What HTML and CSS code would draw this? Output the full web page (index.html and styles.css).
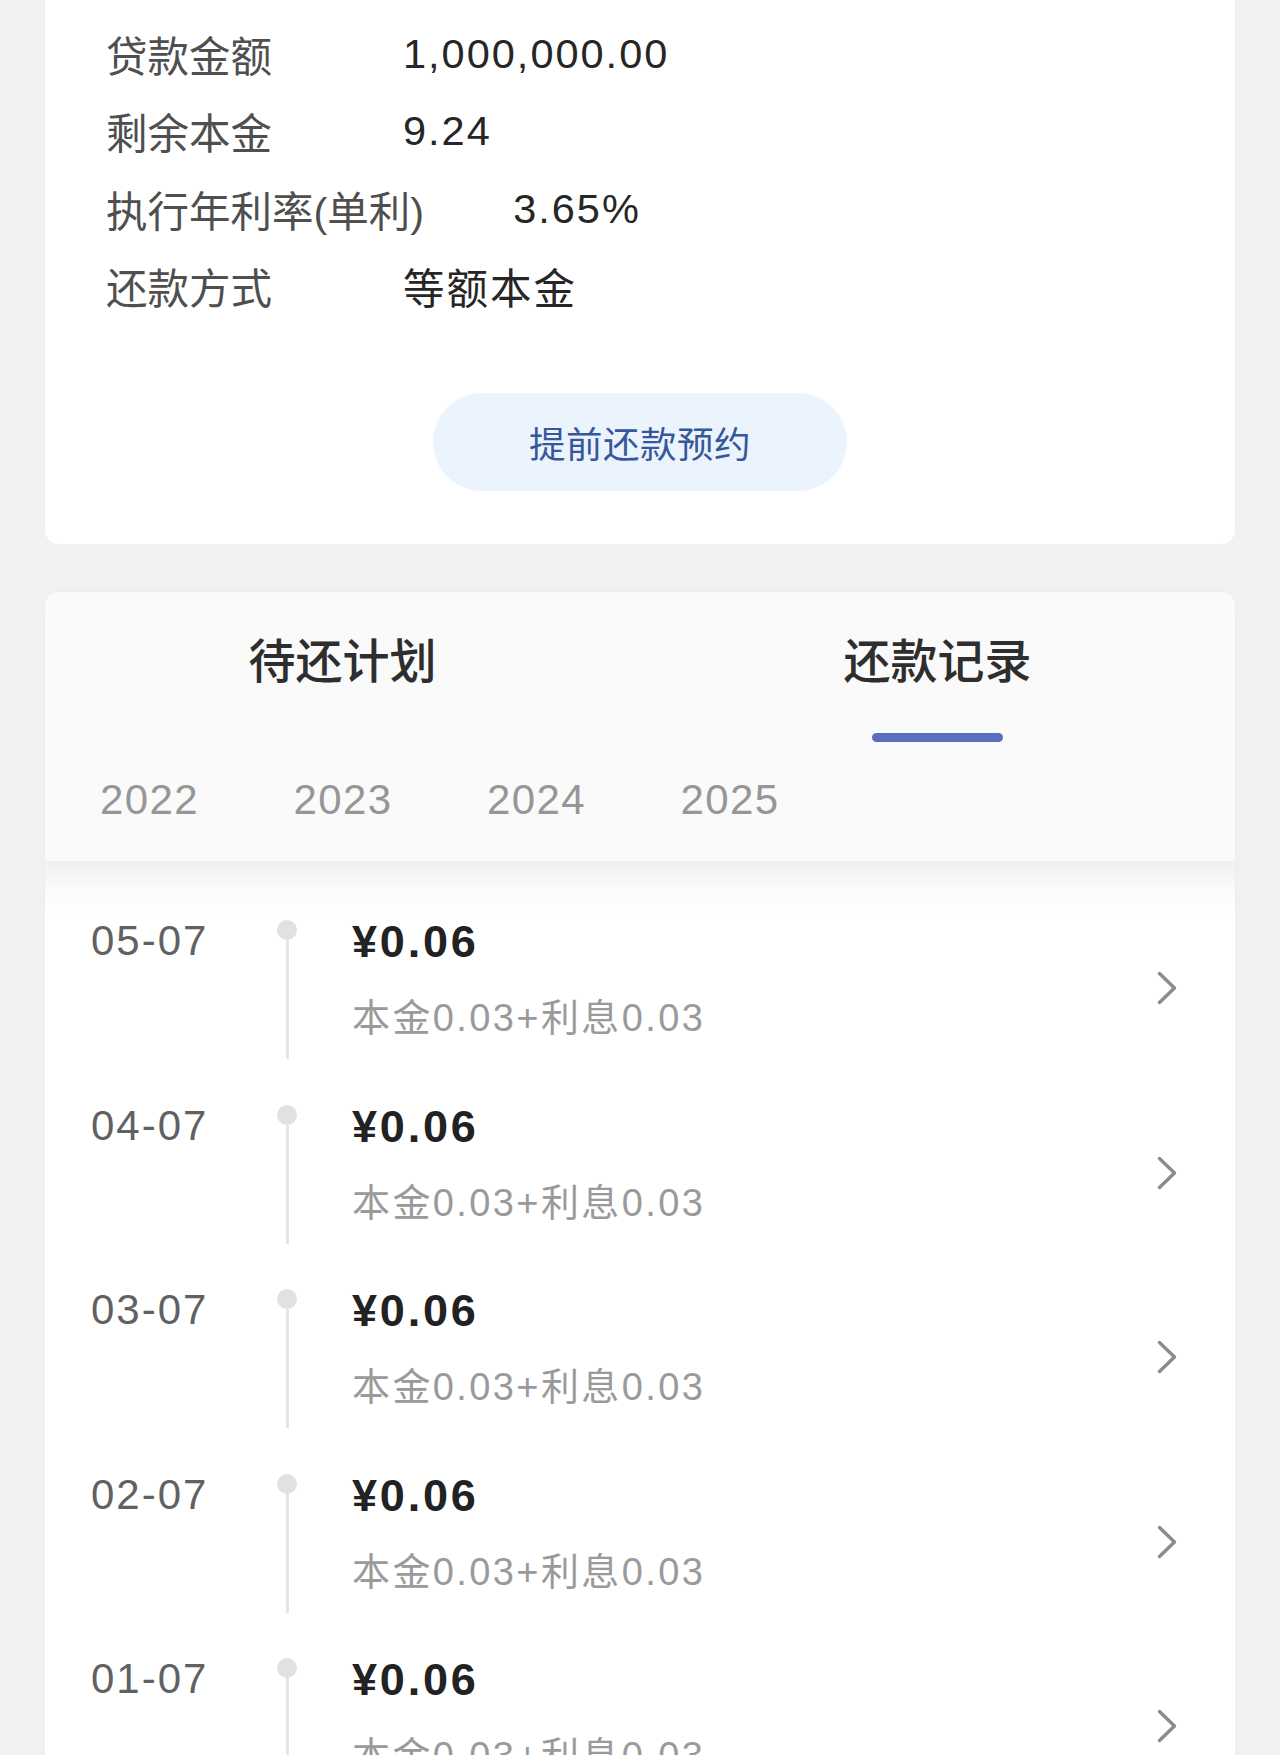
FILE: index.html
```html
<!DOCTYPE html>
<html lang="zh-CN">
<head>
<meta charset="utf-8">
<title>还款记录</title>
<link rel="stylesheet" href="styles.css">
</head>
<body>
<div class="page">
  <section class="card info-card">
    <div class="info-row"><span class="info-label">贷款金额</span><span class="info-value">1,000,000.00</span></div>
    <div class="info-row"><span class="info-label">剩余本金</span><span class="info-value">9.24</span></div>
    <div class="info-row"><span class="info-label">执行年利率(单利)</span><span class="info-value">3.65%</span></div>
    <div class="info-row"><span class="info-label">还款方式</span><span class="info-value">等额本金</span></div>
    <div class="btn-wrap"><button class="prepay-btn">提前还款预约</button></div>
  </section>

  <section class="card record-card">
    <div class="record-head">
      <div class="tabs">
        <div class="tab">待还计划</div>
        <div class="tab active">还款记录<span class="tab-bar"></span></div>
      </div>
      <div class="years">
        <span class="year">2022</span>
        <span class="year">2023</span>
        <span class="year">2024</span>
        <span class="year">2025</span>
      </div>
    </div>
    <div class="record-list">
      <div class="record-row">
        <div class="rec-date">05-07</div>
        <div class="rec-line"><span class="dot"></span><span class="stem"></span></div>
        <div class="rec-body"><div class="rec-amount">¥0.06</div><div class="rec-detail">本金0.03+利息0.03</div></div>
        <svg class="chev" viewBox="0 0 20 34" width="20" height="34"><path d="M2.5 2.5 L17.5 17 L2.5 31.5" fill="none" stroke="#8c8c8c" stroke-width="3.5" stroke-linecap="round" stroke-linejoin="round"/></svg>
      </div>
      <div class="record-row">
        <div class="rec-date">04-07</div>
        <div class="rec-line"><span class="dot"></span><span class="stem"></span></div>
        <div class="rec-body"><div class="rec-amount">¥0.06</div><div class="rec-detail">本金0.03+利息0.03</div></div>
        <svg class="chev" viewBox="0 0 20 34" width="20" height="34"><path d="M2.5 2.5 L17.5 17 L2.5 31.5" fill="none" stroke="#8c8c8c" stroke-width="3.5" stroke-linecap="round" stroke-linejoin="round"/></svg>
      </div>
      <div class="record-row">
        <div class="rec-date">03-07</div>
        <div class="rec-line"><span class="dot"></span><span class="stem"></span></div>
        <div class="rec-body"><div class="rec-amount">¥0.06</div><div class="rec-detail">本金0.03+利息0.03</div></div>
        <svg class="chev" viewBox="0 0 20 34" width="20" height="34"><path d="M2.5 2.5 L17.5 17 L2.5 31.5" fill="none" stroke="#8c8c8c" stroke-width="3.5" stroke-linecap="round" stroke-linejoin="round"/></svg>
      </div>
      <div class="record-row">
        <div class="rec-date">02-07</div>
        <div class="rec-line"><span class="dot"></span><span class="stem"></span></div>
        <div class="rec-body"><div class="rec-amount">¥0.06</div><div class="rec-detail">本金0.03+利息0.03</div></div>
        <svg class="chev" viewBox="0 0 20 34" width="20" height="34"><path d="M2.5 2.5 L17.5 17 L2.5 31.5" fill="none" stroke="#8c8c8c" stroke-width="3.5" stroke-linecap="round" stroke-linejoin="round"/></svg>
      </div>
      <div class="record-row">
        <div class="rec-date">01-07</div>
        <div class="rec-line"><span class="dot"></span><span class="stem"></span></div>
        <div class="rec-body"><div class="rec-amount">¥0.06</div><div class="rec-detail">本金0.03+利息0.03</div></div>
        <svg class="chev" viewBox="0 0 20 34" width="20" height="34"><path d="M2.5 2.5 L17.5 17 L2.5 31.5" fill="none" stroke="#8c8c8c" stroke-width="3.5" stroke-linecap="round" stroke-linejoin="round"/></svg>
      </div>
    </div>
  </section>
</div>
</body>
</html>
```

FILE: styles.css
```css
* { box-sizing: border-box; }

html, body {
  margin: 0;
  padding: 0;
  background: #f2f2f2;
}

body {
  font-family: "Liberation Sans", "Noto Sans CJK SC", sans-serif;
  color: #333;
  height: 1755px;
  overflow: hidden;
}

.page {
  padding: 0 45px;
  display: flex;
  flex-direction: column;
  gap: 48px;
}

.card {
  background: #fff;
  border-radius: 14px;
}

/* ---------- info card ---------- */
.info-card {
  border-radius: 0 0 14px 14px;
  padding: 15px 0 53px 61px;
}

.info-row {
  display: flex;
  align-items: center;
  height: 77.5px;
  font-size: 41.5px;
}

.info-label {
  min-width: 208px;
  margin-right: 89px;
  color: #4f4f4f;
}

.info-value {
  color: #262626;
  letter-spacing: 2px;
}

.btn-wrap {
  display: flex;
  justify-content: center;
  padding-right: 61px;
  margin-top: 68px;
}

.prepay-btn {
  width: 414px;
  height: 98px;
  border: none;
  border-radius: 49px;
  background: #ebf3fd;
  color: #36579c;
  font-family: "Noto Sans CJK SC", sans-serif;
  font-size: 36.5px;
  letter-spacing: 0.5px;
}

/* ---------- record card ---------- */
.record-card {
  overflow: hidden;
  box-shadow: 0 0 10px rgba(0, 0, 0, 0.03);
  min-height: 1300px;
}

.record-head {
  background: #fafafa;
  padding: 38px 0 36px;
}

.tabs {
  display: flex;
}

.tab {
  flex: 1;
  display: flex;
  flex-direction: column;
  align-items: center;
  font-family: "Noto Sans CJK SC", sans-serif;
  font-size: 47px;
  font-weight: 500;
  line-height: 56px;
  color: #2e2e2e;
  height: 112px;
}

.tab-bar {
  display: block;
  width: 131px;
  height: 9px;
  margin-top: 47px;
  border-radius: 5px;
  background: #5a6ebf;
}

.years {
  display: flex;
  padding-left: 55px;
  margin-top: 33px;
}

.year {
  width: 193.5px;
  font-size: 42px;
  line-height: 50px;
  letter-spacing: 1.4px;
  color: #969696;
}

.record-list {
  background: linear-gradient(#f0f0f0 0, #fbfbfb 30px, #fff 55px);
  padding-top: 50px;
}

.record-row {
  display: flex;
  align-items: flex-start;
  height: 184.6px;
  padding-left: 46px;
  padding-right: 58px;
}

.rec-date {
  width: 186px;
  margin-top: 5px;
  font-size: 42px;
  line-height: 50px;
  letter-spacing: 2px;
  color: #616161;
}

.rec-line {
  width: 20px;
  display: flex;
  flex-direction: column;
  align-items: center;
  margin-top: 9px;
}

.dot {
  width: 20px;
  height: 20px;
  border-radius: 50%;
  background: #e1e1e1;
}

.stem {
  width: 3px;
  height: 119px;
  background: #e5e5e5;
}

.rec-body {
  flex: 1;
  margin-left: 55px;
  margin-top: 5px;
}

.rec-amount {
  font-size: 45px;
  line-height: 52px;
  font-weight: 700;
  letter-spacing: 2.8px;
  color: #222;
}

.rec-detail {
  margin-top: 27px;
  font-size: 38px;
  line-height: 46px;
  letter-spacing: 2.4px;
  color: #9a9a9a;
}

.chev {
  margin-top: 60px;
  flex: none;
}
```
